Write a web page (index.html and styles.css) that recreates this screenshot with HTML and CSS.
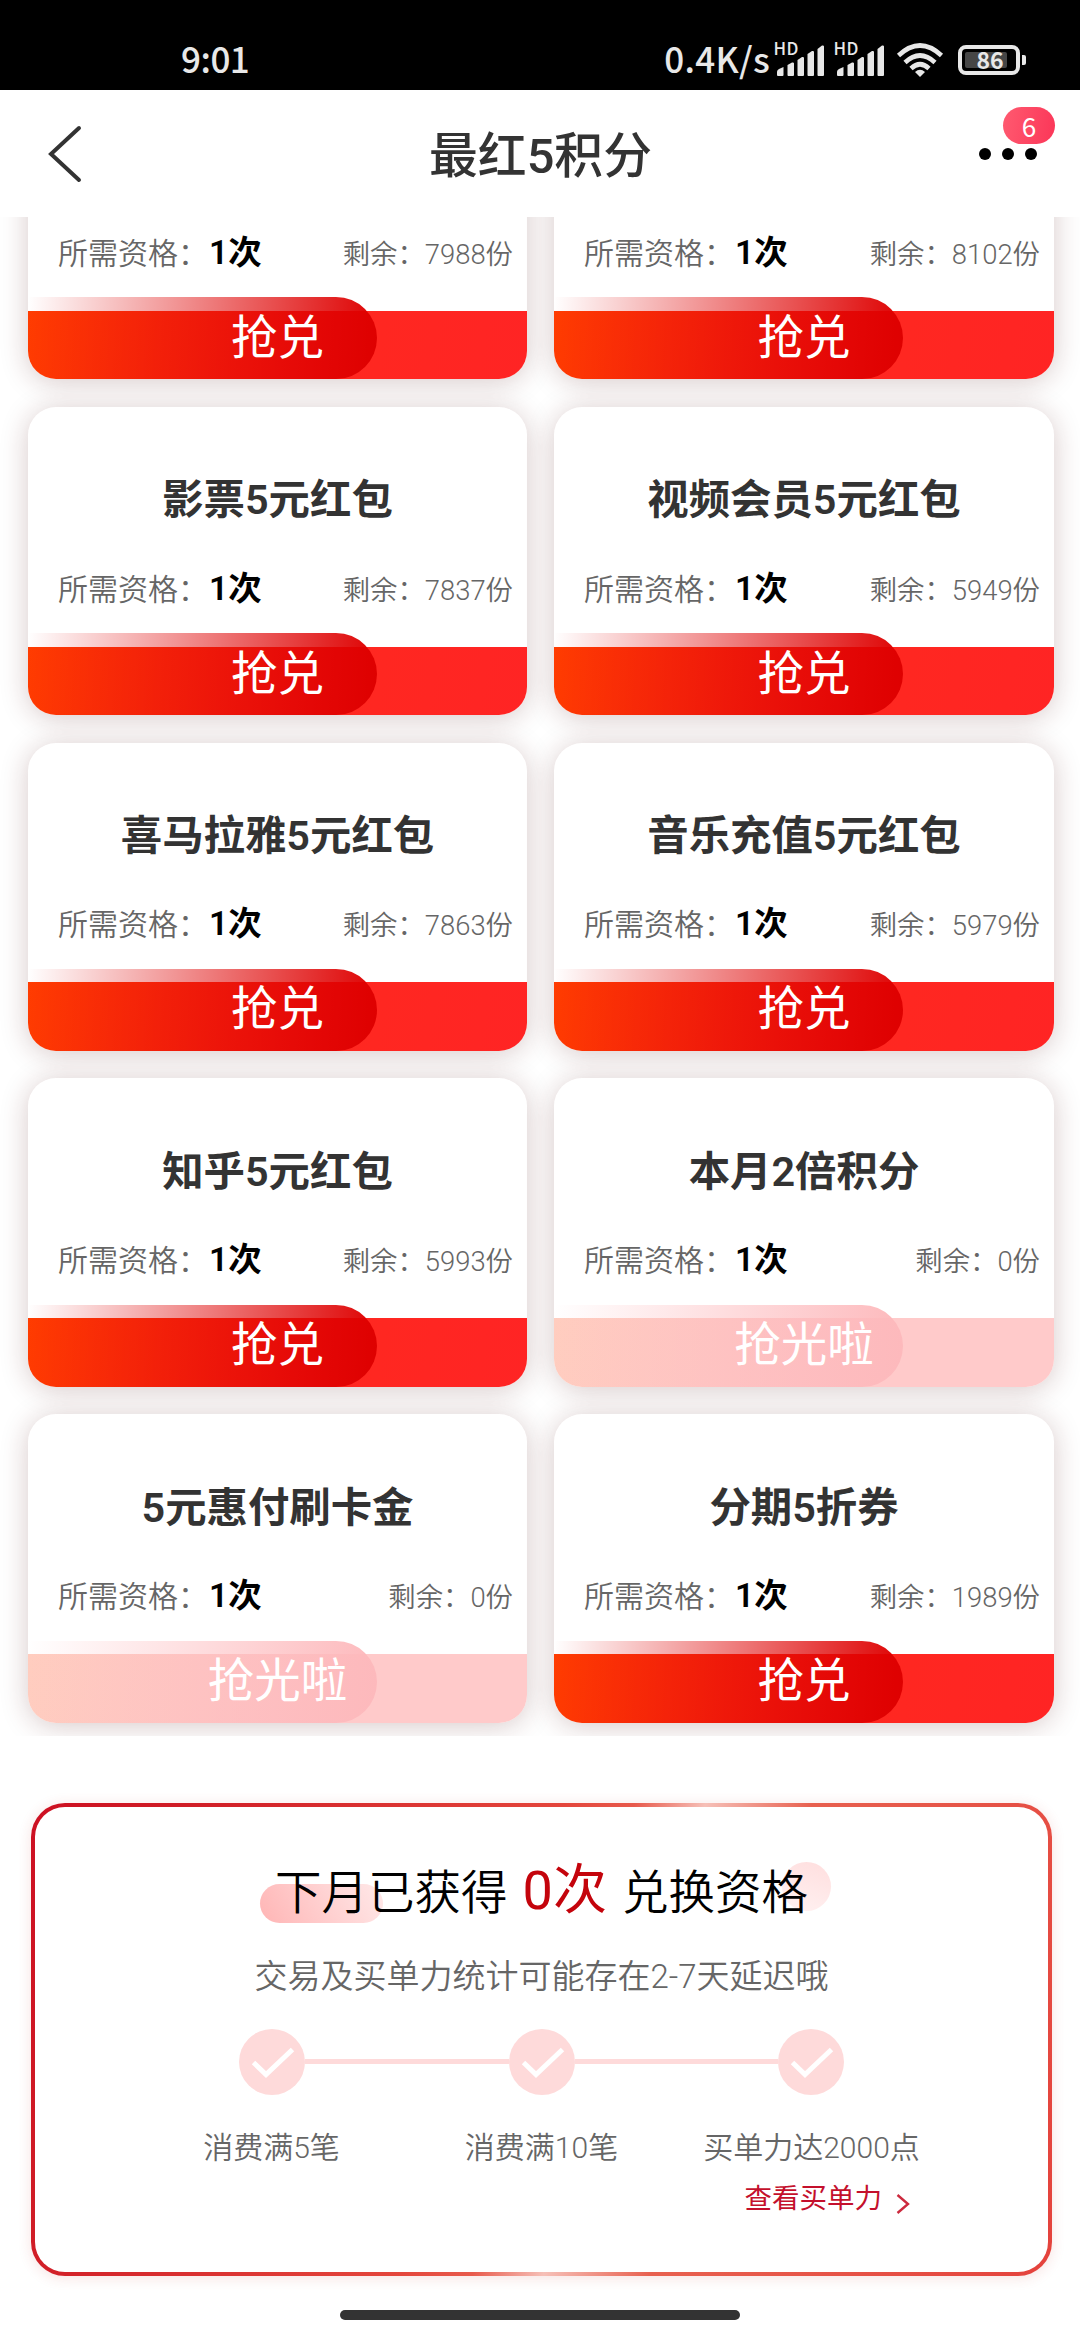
FILE: index.html
```html
<!DOCTYPE html>
<html lang="zh-CN">
<head>
<meta charset="utf-8">
<title>最红5积分</title>
<link rel="stylesheet" href="styles.css">
</head>
<body>
<header class="status">
  <span class="clock">9:01</span>
  <div class="status-right">
    <span class="speed">0.4K/s</span>
    <svg class="signal" viewBox="0 0 50 34" fill="#e8e8e8"><text x="-.5" y="12" textLength="25" class="hd">HD</text><path d="M3 32v-3q0-2 2-3l4.500-2V32q0 1-1 1H4q-1 0-1-1zM13.500 22l4.500-2.500q2-.5 2 1V32q0 1-1 1h-4.500q-1 0-1-1zM23.500 17l4.500-3q2-.5 2 1V32q0 1-1 1h-4.500q-1 0-1-1zM33.500 11l4.500-3q2-.5 2 1v23q0 1-1 1h-4.500q-1 0-1-1zM43.500 6l4.500-3.500q2-.5 2 1V32q0 1-1 1h-4.500q-1 0-1-1z"/></svg>
    <svg class="signal second" viewBox="0 0 50 34" fill="#e8e8e8"><text x="-.5" y="12" textLength="25" class="hd">HD</text><path d="M3 32v-3q0-2 2-3l4.500-2V32q0 1-1 1H4q-1 0-1-1zM13.500 22l4.500-2.500q2-.5 2 1V32q0 1-1 1h-4.500q-1 0-1-1zM23.500 17l4.500-3q2-.5 2 1V32q0 1-1 1h-4.500q-1 0-1-1zM33.500 11l4.500-3q2-.5 2 1v23q0 1-1 1h-4.500q-1 0-1-1zM43.500 6l4.500-3.500q2-.5 2 1V32q0 1-1 1h-4.500q-1 0-1-1z"/></svg>
    <svg class="wifi" viewBox="0 0 46 34" fill="none" stroke="#e8e8e8" stroke-width="4.600"><path d="M1.500 12.500Q23-7.500 44.500 12.500M8 19.500Q23 5.500 38 19.500M14 25.500Q23 17 32 25.500"/><path d="M18 29q5-4.500 10 0l-5 5z" fill="#e8e8e8" stroke="none"/></svg>
    <svg class="battery" viewBox="0 0 68 30"><rect x="2" y="2" width="58" height="26" rx="6" fill="none" stroke="#e8e8e8" stroke-width="4"/><rect x="7" y="7" width="42" height="16" rx="2" fill="#464646"/><path d="M64 10h2q2 0 2 2v6q0 2-2 2h-2z" fill="#e8e8e8"/><text x="32" y="23.500" text-anchor="middle" class="pct">86</text></svg>
  </div>
</header>
<nav class="navbar">
  <svg class="back" viewBox="0 0 34 58" fill="none" stroke="#333" stroke-width="4" stroke-linecap="round"><path d="M31 3L3 29l28 26"/></svg>
  <h1 class="page-title">最红5积分</h1>
  <div class="more"><i class="dot"></i><i class="dot"></i><i class="dot"></i><span class="badge">6</span></div>
</nav>
<main>
  <section class="coupons">
    <article class="card"><div class="meta"><span>所需资格：<b>1次</b></span><span class="left">剩余：7988份</span></div><div class="btn"><span class="sheen"></span><span class="btn-text">抢兑</span></div></article>
    <article class="card"><div class="meta"><span>所需资格：<b>1次</b></span><span class="left">剩余：8102份</span></div><div class="btn"><span class="sheen"></span><span class="btn-text">抢兑</span></div></article>
    <article class="card"><h2>影票5元红包</h2><div class="meta"><span>所需资格：<b>1次</b></span><span class="left">剩余：7837份</span></div><div class="btn"><span class="sheen"></span><span class="btn-text">抢兑</span></div></article>
    <article class="card"><h2>视频会员5元红包</h2><div class="meta"><span>所需资格：<b>1次</b></span><span class="left">剩余：5949份</span></div><div class="btn"><span class="sheen"></span><span class="btn-text">抢兑</span></div></article>
    <article class="card"><h2>喜马拉雅5元红包</h2><div class="meta"><span>所需资格：<b>1次</b></span><span class="left">剩余：7863份</span></div><div class="btn"><span class="sheen"></span><span class="btn-text">抢兑</span></div></article>
    <article class="card"><h2>音乐充值5元红包</h2><div class="meta"><span>所需资格：<b>1次</b></span><span class="left">剩余：5979份</span></div><div class="btn"><span class="sheen"></span><span class="btn-text">抢兑</span></div></article>
    <article class="card"><h2>知乎5元红包</h2><div class="meta"><span>所需资格：<b>1次</b></span><span class="left">剩余：5993份</span></div><div class="btn"><span class="sheen"></span><span class="btn-text">抢兑</span></div></article>
    <article class="card sold"><h2>本月2倍积分</h2><div class="meta"><span>所需资格：<b>1次</b></span><span class="left">剩余：0份</span></div><div class="btn"><span class="sheen"></span><span class="btn-text">抢光啦</span></div></article>
    <article class="card sold"><h2>5元惠付刷卡金</h2><div class="meta"><span>所需资格：<b>1次</b></span><span class="left">剩余：0份</span></div><div class="btn"><span class="sheen"></span><span class="btn-text">抢光啦</span></div></article>
    <article class="card"><h2>分期5折券</h2><div class="meta"><span>所需资格：<b>1次</b></span><span class="left">剩余：1989份</span></div><div class="btn"><span class="sheen"></span><span class="btn-text">抢兑</span></div></article>
  </section>
  <section class="progress">
    <h3 class="headline"><span>下月已获得</span><em>0次</em><span>兑换资格</span></h3>
    <p class="note">交易及买单力统计可能存在2-7天延迟哦</p>
    <div class="track">
      <svg class="tick" viewBox="0 0 66 66"><circle cx="33" cy="33" r="33" fill="#fedada"/><path d="M14.500 33.500l12.500 12L53.500 20.500" fill="none" stroke="#fff" stroke-width="5"/></svg>
      <i class="line"></i>
      <svg class="tick" viewBox="0 0 66 66"><circle cx="33" cy="33" r="33" fill="#fedada"/><path d="M14.500 33.500l12.500 12L53.500 20.500" fill="none" stroke="#fff" stroke-width="5"/></svg>
      <i class="line"></i>
      <svg class="tick" viewBox="0 0 66 66"><circle cx="33" cy="33" r="33" fill="#fedada"/><path d="M14.500 33.500l12.500 12L53.500 20.500" fill="none" stroke="#fff" stroke-width="5"/></svg>
    </div>
    <div class="labels"><span>消费满5笔</span><span>消费满10笔</span><span>买单力达2000点</span></div>
    <a class="link">查看买单力<svg class="chev" viewBox="0 0 14 20" fill="none" stroke="#cc2a3e" stroke-width="2.400"><path d="M1.500 1L12 10 1.500 19"/></svg></a>
  </section>
</main>
<div class="home"></div>
</body>
</html>
```

FILE: styles.css
```css
* { box-sizing: border-box; margin: 0; padding: 0; }
body {
  width: 1080px;
  height: 2340px;
  overflow: hidden;
  background: #fff;
  font-family: Roboto, "Noto Sans CJK SC", sans-serif;
  font-weight: 400;
}
i, em { font-style: normal; }
svg { display: block; overflow: visible; flex: none; }

/* status bar */
.status {
  height: 90px;
  padding: 29px 54px 0 181px;
  background: #000;
  color: #e8e8e8;
  display: flex;
  justify-content: space-between;
  align-items: center;
  font: 500 35px/60px "Noto Sans CJK SC", sans-serif;
}
.clock { letter-spacing: -.5px; position: relative; top: -2px; }
.status-right { display: flex; align-items: center; }
.speed { margin-right: 4px; letter-spacing: .3px; position: relative; top: -2px; }
.signal { width: 50px; height: 34px; }
.second { margin-left: 10px; }
.hd { font: 500 17px "Noto Sans CJK SC", sans-serif; }
.wifi { width: 46px; height: 34px; margin-left: 13px; }
.battery { width: 68px; height: 30px; margin-left: 15px; }
.pct { font: 700 23px "Noto Sans CJK SC", sans-serif; fill: #e8e8e8; }

/* title bar */
.navbar {
  height: 127px;
  padding: 0 43px 0 48px;
  display: flex;
  align-items: center;
  justify-content: space-between;
}
.back { width: 34px; height: 58px; }
.page-title {
  font-size: 48.800px;
  font-weight: 500;
  line-height: 70px;
  color: #333;
  padding-top: 6px;
  margin-left: 20px;
}
.more { position: relative; display: flex; gap: 11px; }
.dot { width: 12px; height: 12px; border-radius: 50%; background: #000; }
.badge {
  position: absolute;
  top: -41px;
  left: 24px;
  width: 52px;
  height: 37px;
  border-radius: 19px;
  background: linear-gradient(100deg, #ff5a70, #fb3658);
  color: #fff;
  font: 400 26px/37px "Noto Sans CJK SC", sans-serif;
  text-align: center;
}

/* coupon list */
.coupons {
  height: 1519px;
  padding: 0 26px 13.5px 28px;
  overflow: hidden;
  display: grid;
  grid-template-columns: 499px 500px;
  column-gap: 27px;
  row-gap: 27.500px;
  grid-auto-rows: 308.300px;
  align-content: end;
}
.card {
  border-radius: 28px;
  background: #fff;
  box-shadow: 0 3px 28px rgba(80, 20, 20, .23);
  display: flex;
  flex-direction: column;
  justify-content: flex-end;
}
.card h2 {
  text-align: center;
  color: #333;
  font-size: 41.400px;
  font-weight: 600;
  line-height: 60px;
  margin-bottom: 31.500px;
}
.meta {
  display: flex;
  justify-content: space-between;
  align-items: baseline;
  height: 56px;
  margin-bottom: 29px;
  padding: 0 14px 0 30px;
  color: #666;
  font-size: 30px;
  line-height: 56px;
  font-weight: 350;
}
.meta b { font-size: 33.500px; font-weight: 600; color: #000; line-height: 50px; margin-left: 1px; }
.left { font-size: 27.400px; }
.btn {
  position: relative;
  height: 68.500px;
  border-radius: 0 0 28px 28px;
  background: linear-gradient(100deg, #ff3c00, #ff2820 60%, #ff2424);
  text-align: center;
}
.sheen {
  position: absolute;
  left: 0;
  bottom: 0;
  width: 349px;
  height: 82px;
  border-radius: 0 41px 41px 28px;
  background: linear-gradient(93deg, rgba(221, 0, 0, 0), #de0000);
}
.btn-text {
  position: relative;
  display: block;
  top: -7px;
  color: #fff;
  font-size: 46.500px;
  line-height: 68px;
  font-weight: 400;
}
.sold .btn { background: linear-gradient(100deg, #ffcdbf, #ffcaca 50%, #ffcaca); }
.sold .sheen { background: linear-gradient(93deg, rgba(253, 184, 188, 0), #fdb9bc); }

/* progress panel */
.progress {
  width: 1021px;
  height: 473px;
  margin: 67px 0 0 31px;
  padding-top: 51px;
  border: 4.500px solid transparent;
  border-radius: 34px;
  background:
    linear-gradient(#fff, #fff) padding-box,
    linear-gradient(109deg, #cd1022 0%, #d01c26 12%, #e4463c 45%, #e85a4c 51%, #f6c0b8 57%, #e8604f 66%, #e4423c 100%) border-box;
  box-shadow: 0 2px 14px rgba(200, 50, 40, .14);
  display: flex;
  flex-direction: column;
  align-items: center;
}
.headline {
  position: relative;
  z-index: 0;
  display: flex;
  align-items: baseline;
  gap: 15px;
  height: 66px;
  font-size: 46.500px;
  line-height: 66px;
  font-weight: 350;
  color: #000;
}
.headline em { font-size: 54px; font-weight: 400; color: #c4040c; }
.headline::before, .headline::after { content: ""; position: absolute; z-index: -1; }
.headline::before {
  left: -15px;
  top: 26px;
  width: 123px;
  height: 39px;
  border-radius: 20px;
  background: linear-gradient(60deg, #ffb5b5, #ffe9e9);
}
.headline::after {
  right: -23px;
  top: 4px;
  width: 49px;
  height: 49px;
  border-radius: 50%;
  background: linear-gradient(200deg, #ffdede, #fff2f2);
}
.note {
  margin-top: 28.500px;
  font-size: 33px;
  line-height: 48px;
  font-weight: 350;
  color: #666;
}
.track { margin-top: 28px; display: flex; align-items: center; }
.tick { width: 66px; height: 66px; }
.line { width: 203.500px; height: 5px; background: #fedada; }
.labels {
  margin-top: 29.500px;
  width: 810px;
  display: grid;
  grid-template-columns: repeat(3, 270px);
  text-align: center;
  font-size: 30px;
  line-height: 48px;
  font-weight: 350;
  color: #666;
}
.link {
  align-self: flex-end;
  margin: 7px 138px 0 0;
  display: flex;
  align-items: center;
  gap: 14px;
  font-size: 27.500px;
  line-height: 40px;
  color: #c4102c;
}
.chev { width: 14px; height: 20px; margin-top: 9px; }

.home {
  width: 400px;
  height: 10px;
  margin: 34px auto 0;
  border-radius: 5px;
  background: #333;
}
```
